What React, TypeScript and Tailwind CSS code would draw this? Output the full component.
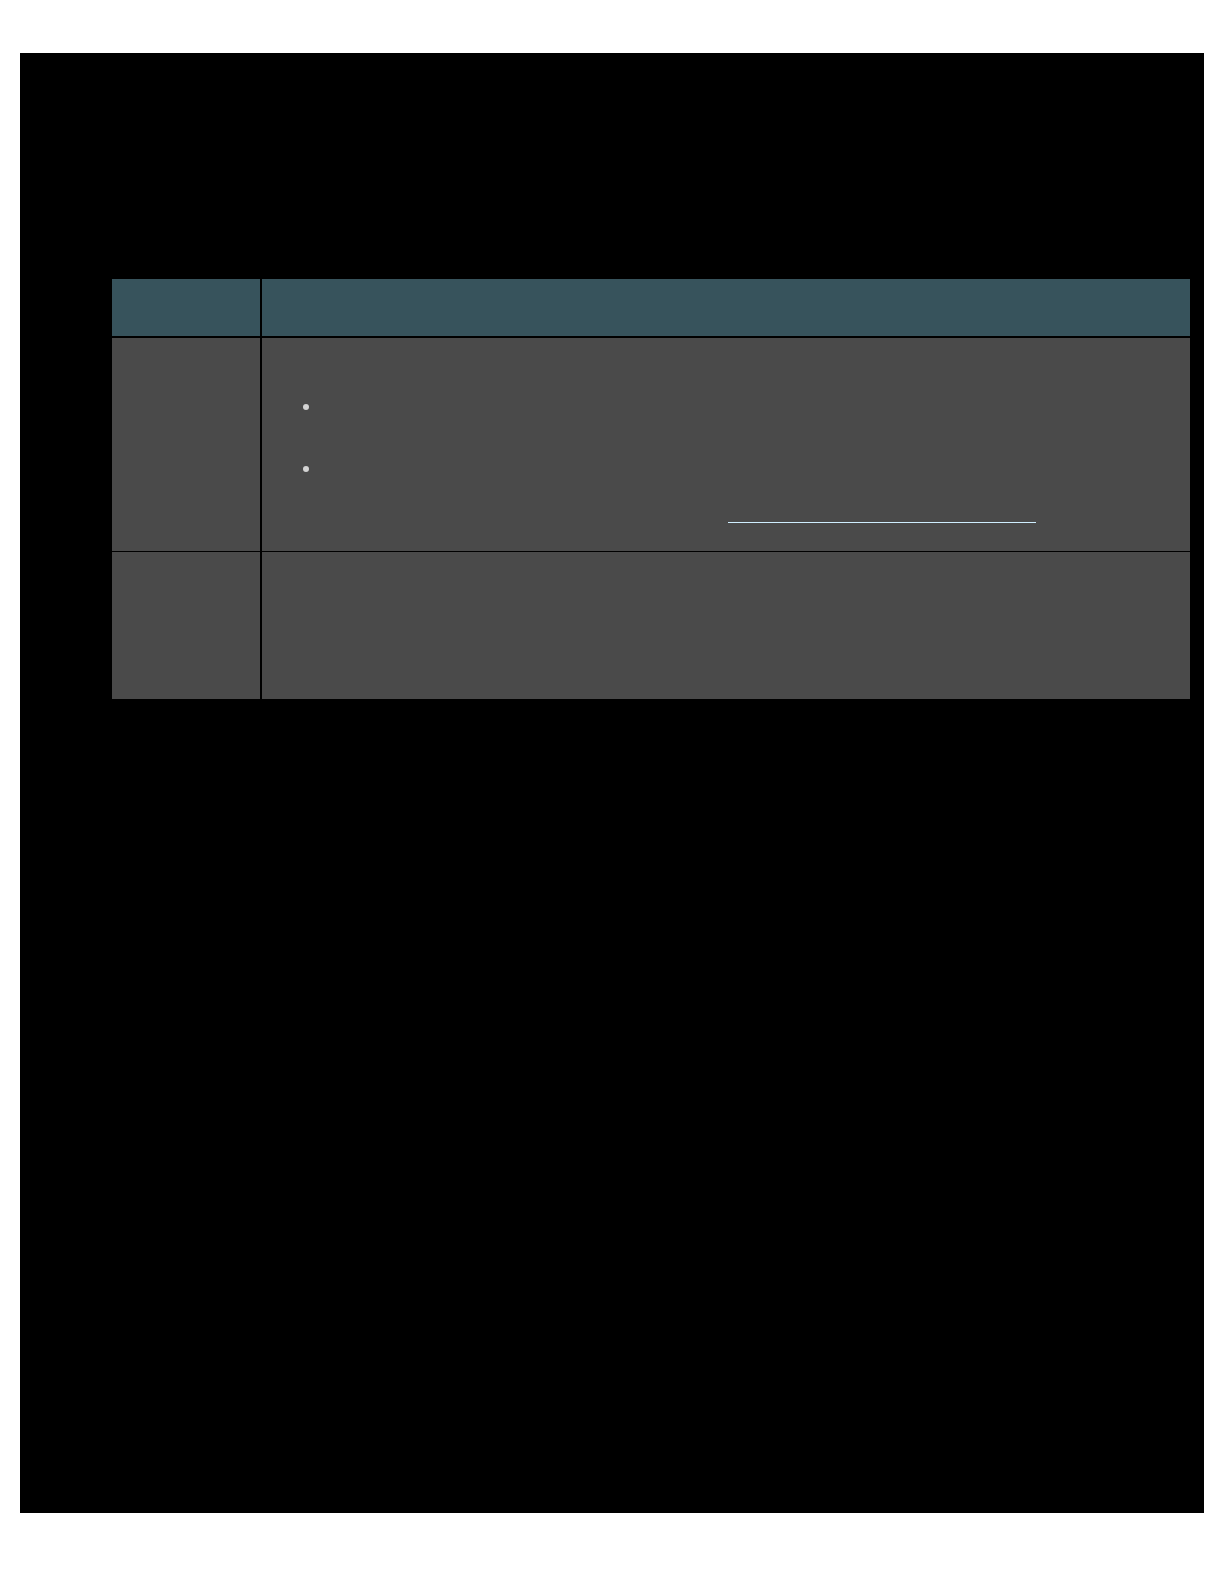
const rows = [
  { id: 1, height: "h-[213px]" },
  { id: 2, height: "h-[147px]" },
];

const Bullet = () => (
  <div className="w-[6px] h-[6px] rounded-full bg-[#d4d4d4]" />
);

export default function App() {
  return (
    <div className="min-h-[1584px] bg-white pt-[53px] px-[20px] font-['Liberation_Sans',sans-serif]">
      <div className="h-[1460px] bg-black pt-[226px] pl-[92px] pr-[14px]">
        <div className="flex flex-col">
          {/* header */}
          <div className="flex h-[59px] gap-x-[2px] border-b-2 border-black">
            <div className="w-[148px] bg-[#37535c]" />
            <div className="flex-1 bg-[#37535c]" />
          </div>

          {/* row 1 */}
          <div className={`flex gap-x-[2px] ${rows[0].height}`}>
            <div className="w-[148px] bg-[#4a4a4a]" />
            <div className="flex-1 bg-[#4a4a4a] pl-[41px] pt-[66px]">
              <div className="flex flex-col gap-y-[56px]">
                <Bullet />
                <Bullet />
              </div>
              <div className="ml-[425px] mt-[50px] w-[308px] h-px bg-[#cfeeff]" />
            </div>
          </div>

          <div className="h-px bg-black" />

          {/* row 2 */}
          <div className={`flex gap-x-[2px] ${rows[1].height}`}>
            <div className="w-[148px] bg-[#4a4a4a]" />
            <div className="flex-1 bg-[#4a4a4a]" />
          </div>
        </div>
      </div>
    </div>
  );
}
